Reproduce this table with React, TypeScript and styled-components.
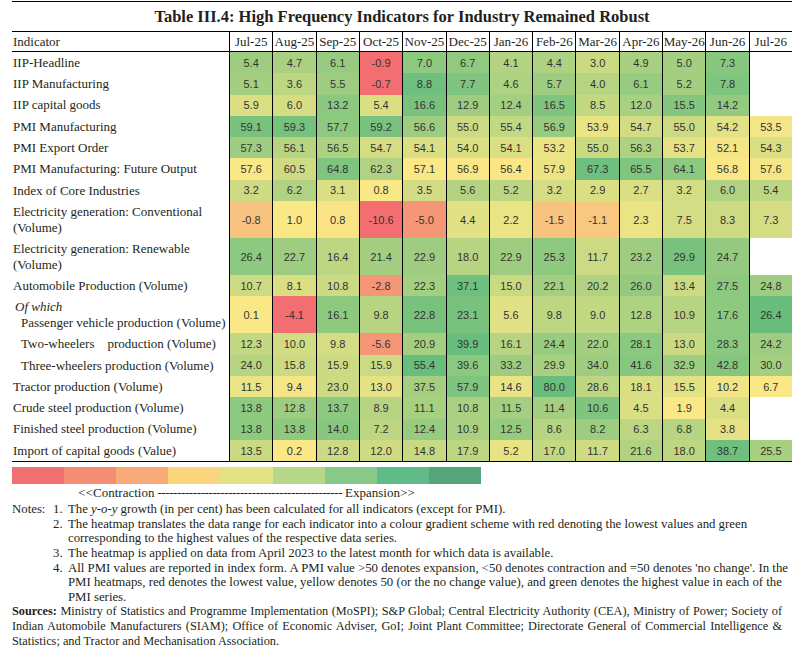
import React from 'react';
import styled, { createGlobalStyle } from 'styled-components';

const GlobalStyle = createGlobalStyle`
  html, body {
    margin: 0;
    padding: 0;
    background: #ffffff;
  }
  body {
    font-family: 'Liberation Serif', 'Times New Roman', serif;
    color: #231f20;
  }
`;

const MONTHS = ['Jul-25', 'Aug-25', 'Sep-25', 'Oct-25', 'Nov-25', 'Dec-25', 'Jan-26', 'Feb-26', 'Mar-26', 'Apr-26', 'May-26', 'Jun-26', 'Jul-26'];

const LEGEND = ['#f07073', '#f58d74', '#f8aa78', '#fad57e', '#e2e385', '#b6d688', '#88c98a', '#5fbb87', '#57a57a'];

// red -> yellow -> green, t in 0..1
const RED = [242, 110, 112];
const YELLOW = [250, 232, 134];
const GREEN = [96, 187, 125];

const heat = (t: number) => {
  const [a, b, k] = t < 0.5 ? [RED, YELLOW, t / 0.5] : [YELLOW, GREEN, (t - 0.5) / 0.5];
  const c = a.map((v, i) => Math.round(v + (b[i] - v) * k));
  return `rgb(${c[0]}, ${c[1]}, ${c[2]})`;
};

type RowData = {
  label: React.ReactNode;
  values: string;
  t: number[];
  tall?: boolean;
  indent?: boolean;
};

const Page = styled.div`
  width: 780px;
  padding-left: 12px;
`;

const Title = styled.h1`
  margin: 1px 0 0;
  height: 30px;
  box-sizing: border-box;
  border-top: 1px solid #000;
  display: flex;
  align-items: center;
  justify-content: center;
  font-size: 16.5px;
  font-weight: bold;
  color: #231f20;
`;

const Grid = styled.div<{ $tall?: boolean }>`
  display: grid;
  grid-template-columns: 217px repeat(13, 1fr);
  height: ${p => (p.$tall ? '37px' : '21.3px')};
`;

const HeadRow = styled(Grid)`
  height: 21px;
  box-sizing: border-box;
  border-top: 1px solid #000;
  border-bottom: 1px solid #000;
`;

const Body = styled.div`
  border-bottom: 1px solid #000;
`;

const LabelHead = styled.div`
  display: flex;
  align-items: center;
  padding-left: 1px;
  font-size: 13px;
`;

const MonthHead = styled.div`
  border-left: 1px solid #000;
  display: flex;
  align-items: center;
  justify-content: center;
  font-size: 13px;
`;

const Label = styled.div<{ $indent?: boolean }>`
  display: flex;
  align-items: center;
  padding-left: ${p => (p.$indent ? '9px' : '1px')};
  font-size: 13px;
  line-height: 15.5px;
  white-space: nowrap;
`;

const OfWhich = styled.span`
  font-style: italic;
  padding-left: 2px;
`;

const Indent = styled.span`
  padding-left: 8px;
`;

const Cell = styled.div<{ $bg: string }>`
  border-left: 1px solid #000;
  background: ${p => p.$bg};
  display: flex;
  align-items: center;
  justify-content: center;
  font-family: 'Liberation Sans', Arial, sans-serif;
  font-size: 11px;
  color: #333;
`;

const Legend = styled.div`
  width: 469px;
  margin-top: 5px;
`;

const LegendBar = styled.div`
  display: grid;
  grid-template-columns: repeat(9, 1fr);
  height: 17px;
`;

const Swatch = styled.div<{ $c: string }>`
  background: ${p => p.$c};
`;

const LegendText = styled.div`
  text-align: center;
  font-size: 13px;
  line-height: 18px;
  white-space: nowrap;
`;

const Dashes = styled.span`
  letter-spacing: -0.4px;
  margin: 0 3px;
`;

const Notes = styled.div`
  display: grid;
  grid-template-columns: 41px 15px 1fr;
  font-size: 12.8px;
  line-height: 14.6px;
  white-space: nowrap;
`;

const NotesLabel = styled.div`
  grid-column: 1;
`;

const NoteNum = styled.div`
  grid-column: 2;
`;

const NoteText = styled.div`
  grid-column: 3;
`;

const Sources = styled.div`
  width: 770px;
  font-size: 12.3px;
  line-height: 14.6px;
`;

const SourceLine = styled.div<{ $last?: boolean }>`
  text-align: ${p => (p.$last ? 'left' : 'justify')};
  text-align-last: ${p => (p.$last ? 'left' : 'justify')};
  white-space: nowrap;
`;

const ROWS: RowData[] = [
  { label: 'IIP-Headline', values: '5.4 4.7 6.1 -0.9 7.0 6.7 4.1 4.4 3.0 4.9 5.0 7.3', t: [0.8, 0.76, 0.82, 0, 0.85, 0.84, 0.73, 0.75, 0.66, 0.77, 0.78, 0.87] },
  { label: 'IIP Manufacturing', values: '5.1 3.6 5.5 -0.7 8.8 7.7 4.6 5.7 4.0 6.1 5.2 7.8', t: [0.78, 0.7, 0.8, 0, 0.95, 0.9, 0.75, 0.8, 0.72, 0.82, 0.78, 0.9] },
  { label: 'IIP capital goods', values: '5.9 6.0 13.2 5.4 16.6 12.9 12.4 16.5 8.5 12.0 15.5 14.2', t: [0.6, 0.62, 0.86, 0.6, 0.92, 0.8, 0.78, 0.9, 0.68, 0.77, 0.88, 0.83] },
  { label: 'PMI Manufacturing', values: '59.1 59.3 57.7 59.2 56.6 55.0 55.4 56.9 53.9 54.7 55.0 54.2 53.5', t: [0.92, 0.93, 0.85, 0.92, 0.8, 0.65, 0.68, 0.82, 0.55, 0.63, 0.65, 0.58, 0.52] },
  { label: 'PMI Export Order', values: '57.3 56.1 56.5 54.7 54.1 54.0 54.1 53.2 55.0 56.3 53.7 52.1 54.3', t: [0.8, 0.72, 0.75, 0.62, 0.6, 0.6, 0.6, 0.55, 0.66, 0.75, 0.57, 0.52, 0.6] },
  { label: 'PMI Manufacturing: Future Output', values: '57.6 60.5 64.8 62.3 57.1 56.9 56.4 57.9 67.3 65.5 64.1 56.8 57.6', t: [0.5, 0.64, 0.9, 0.74, 0.5, 0.5, 0.49, 0.55, 0.95, 0.9, 0.85, 0.5, 0.52] },
  { label: 'Index of Core Industries', values: '3.2 6.2 3.1 0.8 3.5 5.6 5.2 3.2 2.9 2.7 3.2 6.0 5.4', t: [0.64, 0.74, 0.6, 0.5, 0.63, 0.73, 0.7, 0.62, 0.6, 0.6, 0.62, 0.74, 0.7] },
  { label: <>Electricity generation: Conventional<br />(Volume)</>, tall: true, values: '-0.8 1.0 0.8 -10.6 -5.0 4.4 2.2 -1.5 -1.1 2.3 7.5 8.3 7.3', t: [0.35, 0.5, 0.48, 0, 0.17, 0.58, 0.55, 0.35, 0.37, 0.55, 0.62, 0.65, 0.62] },
  { label: <>Electricity generation: Renewable<br />(Volume)</>, tall: true, values: '26.4 22.7 16.4 21.4 22.9 18.0 22.9 25.3 11.7 23.2 29.9 24.7', t: [0.85, 0.8, 0.7, 0.78, 0.8, 0.72, 0.8, 0.85, 0.65, 0.8, 0.92, 0.83] },
  { label: 'Automobile Production (Volume)', values: '10.7 8.1 10.8 -2.8 22.3 37.1 15.0 22.1 20.2 26.0 13.4 27.5 24.8', t: [0.65, 0.6, 0.65, 0.17, 0.78, 0.95, 0.66, 0.78, 0.74, 0.83, 0.65, 0.85, 0.8] },
  { label: <><OfWhich>Of which</OfWhich><br /><Indent>Passenger vehicle production (Volume)</Indent></>, tall: true, values: '0.1 -4.1 16.1 9.8 22.8 23.1 5.6 9.8 9.0 12.8 10.9 17.6 26.4', t: [0.5, 0, 0.85, 0.72, 0.92, 0.92, 0.58, 0.7, 0.68, 0.75, 0.72, 0.85, 0.97] },
  { label: 'Two-wheelers\u00a0\u00a0\u00a0 production (Volume)', indent: true, values: '12.3 10.0 9.8 -5.6 20.9 39.9 16.1 24.4 22.0 28.1 13.0 28.3 24.2', t: [0.68, 0.63, 0.62, 0.17, 0.78, 0.97, 0.72, 0.82, 0.78, 0.86, 0.66, 0.86, 0.8] },
  { label: 'Three-wheelers production (Volume)', indent: true, values: '24.0 15.8 15.9 15.9 55.4 39.6 33.2 29.9 34.0 41.6 32.9 42.8 30.0', t: [0.72, 0.65, 0.65, 0.65, 0.97, 0.86, 0.8, 0.77, 0.8, 0.87, 0.8, 0.88, 0.78] },
  { label: 'Tractor production (Volume)', values: '11.5 9.4 23.0 13.0 37.5 57.9 14.6 80.0 28.6 18.1 15.5 10.2 6.7', t: [0.55, 0.52, 0.65, 0.57, 0.78, 0.9, 0.56, 0.97, 0.7, 0.6, 0.58, 0.53, 0.5] },
  { label: 'Crude steel production (Volume)', values: '13.8 12.8 13.7 8.9 11.1 10.8 11.5 11.4 10.6 4.5 1.9 4.4', t: [0.85, 0.8, 0.85, 0.72, 0.77, 0.76, 0.78, 0.78, 0.9, 0.6, 0.5, 0.6] },
  { label: 'Finished steel production (Volume)', values: '13.8 13.8 14.0 7.2 12.4 10.9 12.5 8.6 8.2 6.3 6.8 3.8', t: [0.85, 0.85, 0.87, 0.7, 0.82, 0.76, 0.82, 0.72, 0.8, 0.7, 0.72, 0.57] },
  { label: 'Import of capital goods (Value)', values: '13.5 0.2 12.8 12.0 14.8 17.9 5.2 17.0 11.7 21.6 18.0 38.7 25.5', t: [0.66, 0.5, 0.65, 0.64, 0.67, 0.7, 0.56, 0.68, 0.64, 0.74, 0.7, 0.95, 0.77] },
];

export default function App() {
  return (
    <>
      <GlobalStyle />
      <Page>
        <Title>Table III.4: High Frequency Indicators for Industry Remained Robust</Title>
        <HeadRow>
          <LabelHead>Indicator</LabelHead>
          {MONTHS.map(m => (
            <MonthHead key={m}>{m}</MonthHead>
          ))}
        </HeadRow>
        <Body>
          {ROWS.map((r, i) => {
            const vals = r.values.split(' ');
            return (
              <Grid key={i} $tall={r.tall}>
                <Label $indent={r.indent}>
                  <div>{r.label}</div>
                </Label>
                {MONTHS.map((m, j) => (
                  <Cell key={m} $bg={vals[j] ? heat(r.t[j]) : '#fff'}>
                    {vals[j] ?? ''}
                  </Cell>
                ))}
              </Grid>
            );
          })}
        </Body>
        <Legend>
          <LegendBar>
            {LEGEND.map(c => (
              <Swatch key={c} $c={c} />
            ))}
          </LegendBar>
          <LegendText>
            &lt;&lt;Contraction
            <Dashes>-----------------------------------------------</Dashes>
            Expansion&gt;&gt;
          </LegendText>
        </Legend>
        <Notes>
          <NotesLabel>Notes:</NotesLabel>
          <NoteNum>1.</NoteNum>
          <NoteText>
            The <i>y-o-y</i> growth (in per cent) has been calculated for all indicators (except for PMI).
          </NoteText>
          <NoteNum>2.</NoteNum>
          <NoteText>
            The heatmap translates the data range for each indicator into a colour gradient scheme with red denoting the lowest values and green
            <br />
            corresponding to the highest values of the respective data series.
          </NoteText>
          <NoteNum>3.</NoteNum>
          <NoteText>The heatmap is applied on data from April 2023 to the latest month for which data is available.</NoteText>
          <NoteNum>4.</NoteNum>
          <NoteText>
            All PMI values are reported in index form. A PMI value &gt;50 denotes expansion, &lt;50 denotes contraction and =50 denotes 'no change'. In the
            <br />
            PMI heatmaps, red denotes the lowest value, yellow denotes 50 (or the no change value), and green denotes the highest value in each of the
            <br />
            PMI series.
          </NoteText>
        </Notes>
        <Sources>
          <SourceLine>
            <b>Sources:</b> Ministry of Statistics and Programme Implementation (MoSPI); S&amp;P Global; Central Electricity Authority (CEA), Ministry of Power; Society of
          </SourceLine>
          <SourceLine>
            Indian Automobile Manufacturers (SIAM); Office of Economic Adviser, GoI; Joint Plant Committee; Directorate General of Commercial Intelligence &amp;
          </SourceLine>
          <SourceLine $last>Statistics; and Tractor and Mechanisation Association.</SourceLine>
        </Sources>
      </Page>
    </>
  );
}
